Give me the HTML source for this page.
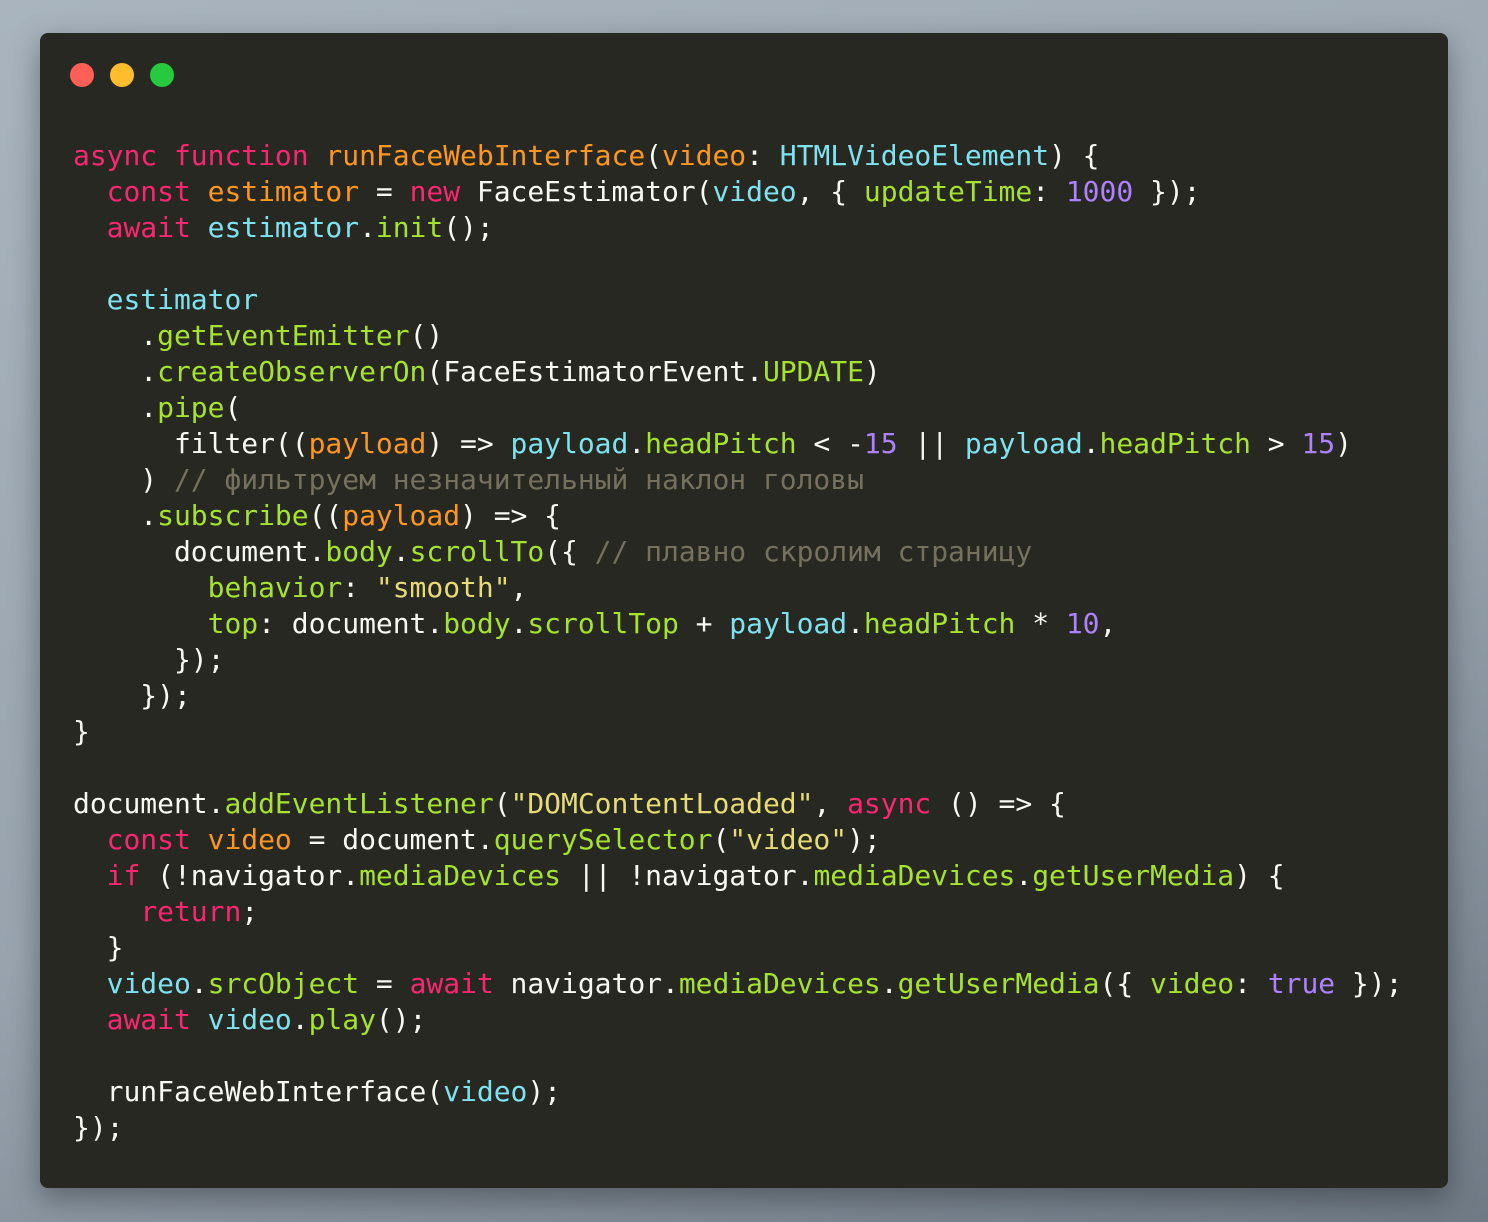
<!DOCTYPE html>
<html><head><meta charset="utf-8"><style>
html,body{margin:0;padding:0}
body{width:1488px;height:1222px;background:linear-gradient(160deg,#a9b4be 0%,#98a3ae 55%,#6f7a85 100%);position:relative;overflow:hidden}
.win{position:absolute;left:40px;top:33px;width:1408px;height:1155px;background:#272822;border-radius:8px;box-shadow:0 10px 30px rgba(0,0,0,0.35)}
.dot{position:absolute;top:30px;width:24px;height:24px;border-radius:50%}
pre{position:absolute;left:33px;top:105px;margin:0;font-family:"DejaVu Sans Mono","Liberation Mono",monospace;font-size:28px;letter-spacing:-0.03px;line-height:36px;color:#f8f8f2;white-space:pre}
.k{color:#f92672}.o{color:#fd971f}.c{color:#7fe3ef}.g{color:#a6e22e}.p{color:#ae81ff}.s{color:#e6db74}.m{color:#75715e}
</style></head><body>
<div class="win">
<div class="dot" style="left:30px;background:#ff5f56"></div>
<div class="dot" style="left:70px;background:#ffbd2e"></div>
<div class="dot" style="left:110px;background:#27c93f"></div>
<pre><span class="k">async</span> <span class="k">function</span> <span class="o">runFaceWebInterface</span>(<span class="o">video</span>: <span class="c">HTMLVideoElement</span>) {
  <span class="k">const</span> <span class="o">estimator</span> = <span class="k">new</span> FaceEstimator(<span class="c">video</span>, { <span class="g">updateTime</span>: <span class="p">1000</span> });
  <span class="k">await</span> <span class="c">estimator</span>.<span class="g">init</span>();

  <span class="c">estimator</span>
    .<span class="g">getEventEmitter</span>()
    .<span class="g">createObserverOn</span>(FaceEstimatorEvent.<span class="g">UPDATE</span>)
    .<span class="g">pipe</span>(
      filter((<span class="o">payload</span>) =&gt; <span class="c">payload</span>.<span class="g">headPitch</span> &lt; -<span class="p">15</span> || <span class="c">payload</span>.<span class="g">headPitch</span> &gt; <span class="p">15</span>)
    ) <span class="m">// фильтруем незначительный наклон головы</span>
    .<span class="g">subscribe</span>((<span class="o">payload</span>) =&gt; {
      document.<span class="g">body</span>.<span class="g">scrollTo</span>({ <span class="m">// плавно скролим страницу</span>
        <span class="g">behavior</span>: <span class="s">"smooth"</span>,
        <span class="g">top</span>: document.<span class="g">body</span>.<span class="g">scrollTop</span> + <span class="c">payload</span>.<span class="g">headPitch</span> * <span class="p">10</span>,
      });
    });
}

document.<span class="g">addEventListener</span>(<span class="s">"DOMContentLoaded"</span>, <span class="k">async</span> () =&gt; {
  <span class="k">const</span> <span class="o">video</span> = document.<span class="g">querySelector</span>(<span class="s">"video"</span>);
  <span class="k">if</span> (!navigator.<span class="g">mediaDevices</span> || !navigator.<span class="g">mediaDevices</span>.<span class="g">getUserMedia</span>) {
    <span class="k">return</span>;
  }
  <span class="c">video</span>.<span class="g">srcObject</span> = <span class="k">await</span> navigator.<span class="g">mediaDevices</span>.<span class="g">getUserMedia</span>({ <span class="g">video</span>: <span class="p">true</span> });
  <span class="k">await</span> <span class="c">video</span>.<span class="g">play</span>();

  runFaceWebInterface(<span class="c">video</span>);
});</pre>
</div>
</body></html>
